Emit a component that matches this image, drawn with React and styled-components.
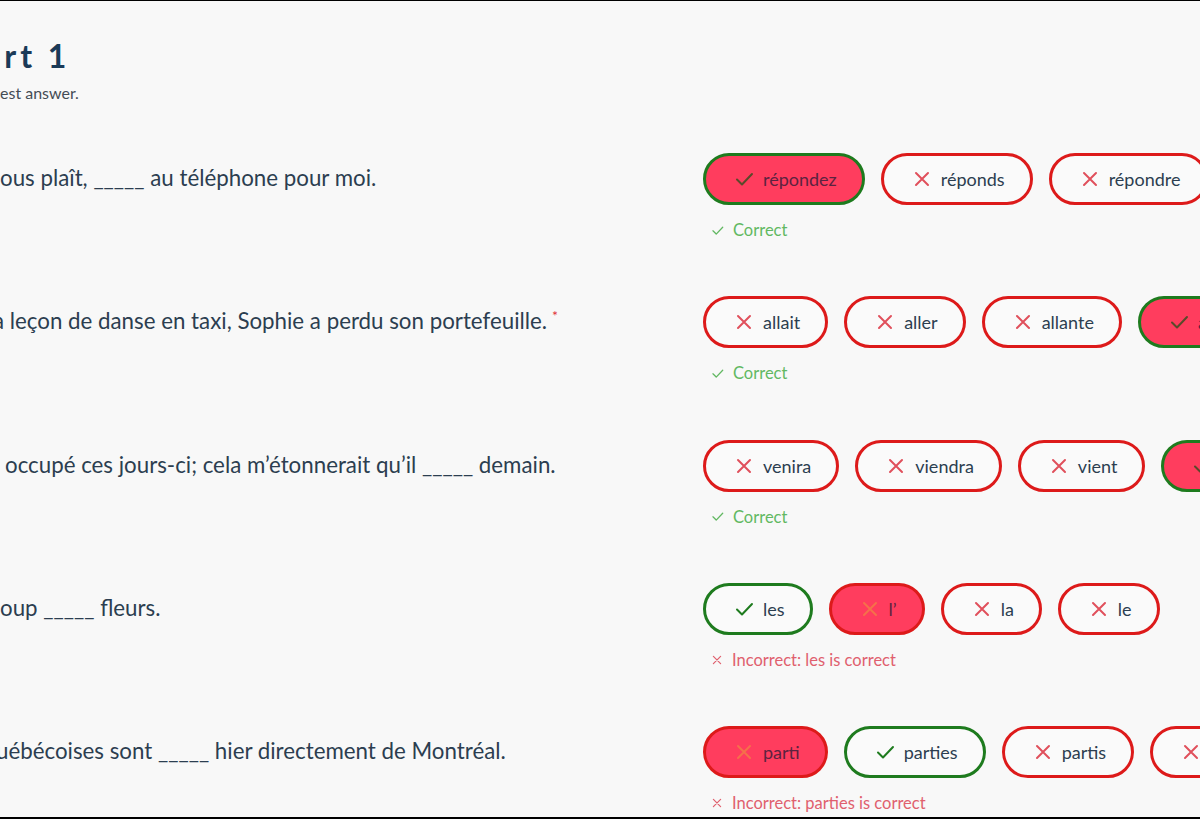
import React from 'react';
import styled, { createGlobalStyle } from 'styled-components';

const GlobalStyle = createGlobalStyle`
  html, body {
    margin: 0;
    padding: 0;
    background: #f8f8f8;
    overflow: hidden;
  }
  * { box-sizing: border-box; }
`;

// Styled Components
const Frame = styled.div`
  width: 1200px;
  height: 819px;
  border-top: 1px solid #000;
  border-bottom: 2px solid #000;
  background: #f8f8f8;
  overflow: hidden;
  font-family: Lato, 'Noto Sans', sans-serif;
  color: #2c3e50;
`;

const Header = styled.header`
  padding-top: 36px;
  height: 152px;
`;

const Title = styled.h1`
  margin: 0 0 0 -16px;
  font-size: 32px;
  line-height: 38px;
  font-weight: 700;
  letter-spacing: 4px;
  color: #1b3a57;
  white-space: nowrap;
`;

const Subtitle = styled.p`
  margin: 8px 0 0 0;
  font-size: 16px;
  line-height: 20px;
  color: #444c55;
  white-space: nowrap;
`;

const QuestionList = styled.div`
  display: grid;
  grid-auto-rows: 143.3px;
`;

const QuestionRow = styled.div`
  display: grid;
  grid-template-columns: 703px 497px;
  align-items: start;
`;

const QuestionText = styled.div`
  margin-left: ${(p) => p.$shift || 0}px;
  font-size: 22.3px;
  line-height: 50px;
  color: #2c3e50;
  white-space: nowrap;
`;

const Required = styled.span`
  position: relative;
  top: -8px;
  color: #e0303a;
  font-size: 14px;
  margin-left: 5px;
`;

const AnswerArea = styled.div`
  display: flex;
  flex-direction: column;
  min-width: 0;
`;

const Options = styled.div`
  display: flex;
  gap: 16px;
  flex-wrap: nowrap;
`;

const Pill = styled.button`
  flex: none;
  display: flex;
  align-items: center;
  gap: 9px;
  height: 52px;
  padding: 0 25px 0 28px;
  border-radius: 26px;
  border: 3px solid ${(p) => (p.$correct ? '#1e7b1e' : '#dd1a1a')};
  background: ${(p) => (p.$selected ? '#ff3d5e' : '#fafafa')};
  color: ${(p) => (p.$selected ? '#5c2340' : '#2c3e50')};
  font-family: Lato, 'Noto Sans', sans-serif;
  font-size: 18px;
  white-space: nowrap;
  cursor: pointer;
`;

const Feedback = styled.div`
  display: flex;
  align-items: center;
  gap: 9px;
  margin: 15px 0 0 8px;
  font-size: 16.5px;
  line-height: 20px;
  color: ${(p) => (p.$ok ? '#62b862' : '#e0606e')};
`;

const CheckIcon = ({ color, size = 20 }) => (
  <svg width={size} height={size} viewBox="0 0 20 20" fill="none">
    <path d="M3 10.5l5 5L18 5" stroke={color} strokeWidth="2" strokeLinecap="round" strokeLinejoin="round" />
  </svg>
);

const XIcon = ({ color, size = 20 }) => (
  <svg width={size} height={size} viewBox="0 0 20 20" fill="none">
    <path d="M4 4l12 12M16 4L4 16" stroke={color} strokeWidth="2" strokeLinecap="round" />
  </svg>
);

const questions = [
  {
    text: 'ous plaît, _____ au téléphone pour moi.',
    options: [
      { label: 'répondez', correct: true, selected: true },
      { label: 'réponds' },
      { label: 'répondre' },
    ],
    answer: 'répondez',
  },
  {
    text: 'a leçon de danse en taxi, Sophie a perdu son portefeuille.',
    shift: -7,
    required: true,
    options: [
      { label: 'allait' },
      { label: 'aller' },
      { label: 'allante' },
      { label: 'allant', correct: true, selected: true },
    ],
    answer: 'allant',
  },
  {
    text: 'occupé ces jours-ci; cela m’étonnerait qu’il _____ demain.',
    shift: 5,
    options: [
      { label: 'venira' },
      { label: 'viendra' },
      { label: 'vient' },
      { label: 'vienne', correct: true, selected: true },
    ],
    answer: 'vienne',
  },
  {
    text: 'oup _____ fleurs.',
    options: [
      { label: 'les', correct: true },
      { label: 'l’', selected: true },
      { label: 'la' },
      { label: 'le' },
    ],
    answer: 'les',
  },
  {
    text: 'uébécoises sont _____ hier directement de Montréal.',
    shift: -4,
    options: [
      { label: 'parti', selected: true },
      { label: 'parties', correct: true },
      { label: 'partis' },
      { label: 'partie' },
    ],
    answer: 'parties',
  },
];

function OptionIcon({ correct, selected }) {
  if (correct) return <CheckIcon color={selected ? '#5a4a2a' : '#1e7b1e'} />;
  return <XIcon color={selected ? '#f5704a' : '#e0505c'} />;
}

function Question({ q }) {
  const picked = q.options.find((o) => o.selected);
  const ok = picked && picked.correct;
  return (
    <QuestionRow>
      <QuestionText $shift={q.shift}>
        {q.text}
        {q.required && <Required>*</Required>}
      </QuestionText>
      <AnswerArea>
        <Options>
          {q.options.map((o) => (
            <Pill key={o.label} $correct={o.correct} $selected={o.selected}>
              <OptionIcon correct={o.correct} selected={o.selected} />
              {o.label}
            </Pill>
          ))}
        </Options>
        <Feedback $ok={ok}>
          {ok ? <CheckIcon color="#62b862" size={13} /> : <XIcon color="#e0606e" size={12} />}
          {ok ? 'Correct' : `Incorrect: ${q.answer} is correct`}
        </Feedback>
      </AnswerArea>
    </QuestionRow>
  );
}

export default function App() {
  return (
    <>
      <GlobalStyle />
      <Frame>
        <Header>
          <Title>art 1</Title>
          <Subtitle>est answer.</Subtitle>
        </Header>
        <QuestionList>
          {questions.map((q, i) => (
            <Question key={i} q={q} />
          ))}
        </QuestionList>
      </Frame>
    </>
  );
}
